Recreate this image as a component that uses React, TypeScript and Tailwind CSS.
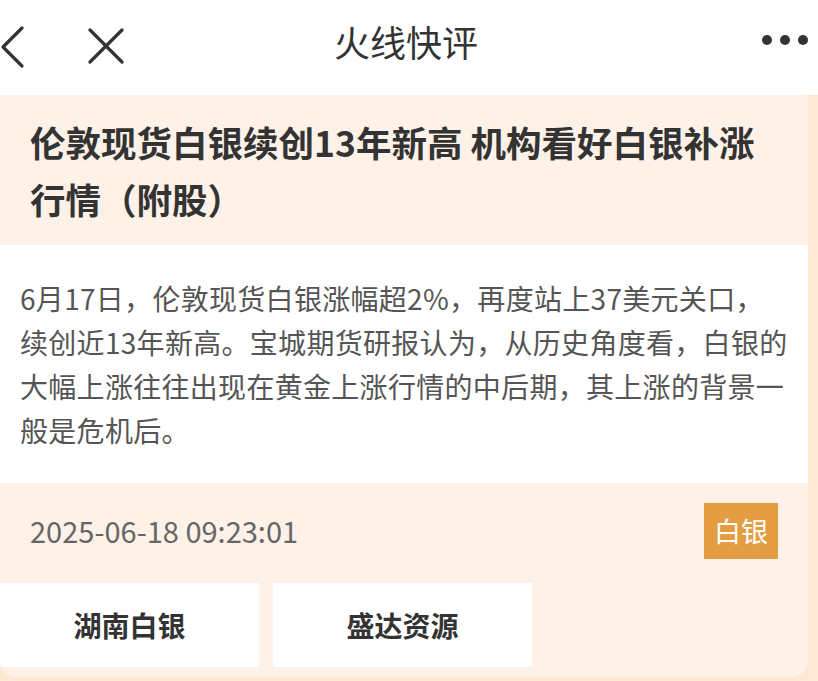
import React from "react";

const font = { fontFamily: '"Noto Sans CJK SC", "Noto Sans", sans-serif' };

function BackIcon() {
  return (
    <svg width="26" height="44" viewBox="0 0 26 44" className="block">
      <polyline
        points="22,3 3,22 22,41"
        fill="none"
        stroke="#333"
        strokeWidth="3.2"
        strokeLinecap="round"
        strokeLinejoin="round"
      />
    </svg>
  );
}

function CloseIcon() {
  return (
    <svg width="36" height="36" viewBox="0 0 36 36" className="block">
      <path
        d="M2 2 L34 34 M34 2 L2 34"
        fill="none"
        stroke="#333"
        strokeWidth="3.2"
        strokeLinecap="round"
      />
    </svg>
  );
}

// line breaks follow the screenshot
const summary = [
  "6月17日，伦敦现货白银涨幅超2%，再度站上37美元关口，",
  "续创近13年新高。宝城期货研报认为，从历史角度看，白银的",
  "大幅上涨往往出现在黄金上涨行情的中后期，其上涨的背景一",
  "般是危机后。",
];

export default function App() {
  const stocks = ["湖南白银", "盛达资源"];

  return (
    <div
      className="w-[818px] h-[681px] overflow-hidden bg-[#fde8d4]"
      style={font}
    >
      <header className="h-[95px] bg-white grid grid-cols-[1fr_auto_1fr] items-center">
        <div className="flex items-center">
          <div className="mt-[-2px]">
            <BackIcon />
          </div>
          <div className="ml-[62px] mt-[-4px]">
            <CloseIcon />
          </div>
        </div>
        <h1 className="text-[36px] text-[#333] font-normal mt-[-14px] ml-[-6px]">
          火线快评
        </h1>
        <div className="flex justify-end items-center gap-[8px] pr-[10px] mt-[-16px]">
          <span className="w-[10px] h-[10px] rounded-full bg-[#333]" />
          <span className="w-[10px] h-[10px] rounded-full bg-[#333]" />
          <span className="w-[10px] h-[10px] rounded-full bg-[#333]" />
        </div>
      </header>

      <article className="w-[808px] h-[582px] bg-[#fef1e8] rounded-tr-[5px] rounded-b-[16px] overflow-hidden">
        <div className="px-[30px] py-[18px]">
          <h2 className="text-[35.5px] leading-[57px] font-bold text-[#333]">
            伦敦现货白银续创13年新高 机构看好白银补涨行情（附股）
          </h2>
        </div>

        <div className="bg-white px-[20px] py-[31px]">
          <p className="text-[28px] leading-[44px] tracking-[0.3px] text-[#555]">
            {summary.map((line) => (
              <span key={line} className="block whitespace-nowrap">
                {line}
              </span>
            ))}
          </p>
        </div>

        <div className="flex items-center justify-between px-[30px] pt-[20px] pb-[24px]">
          <span className="text-[29px] text-[#666]">2025-06-18 09:23:01</span>
          <span className="w-[74px] h-[56px] bg-[#e59d44] text-white text-[27px] flex items-center justify-center">
            白银
          </span>
        </div>

        <div className="flex gap-[14px]">
          {stocks.map((name) => (
            <button
              key={name}
              className="w-[259px] h-[84px] bg-white text-[28px] font-bold text-[#333] flex items-center justify-center"
            >
              {name}
            </button>
          ))}
        </div>
      </article>
    </div>
  );
}
